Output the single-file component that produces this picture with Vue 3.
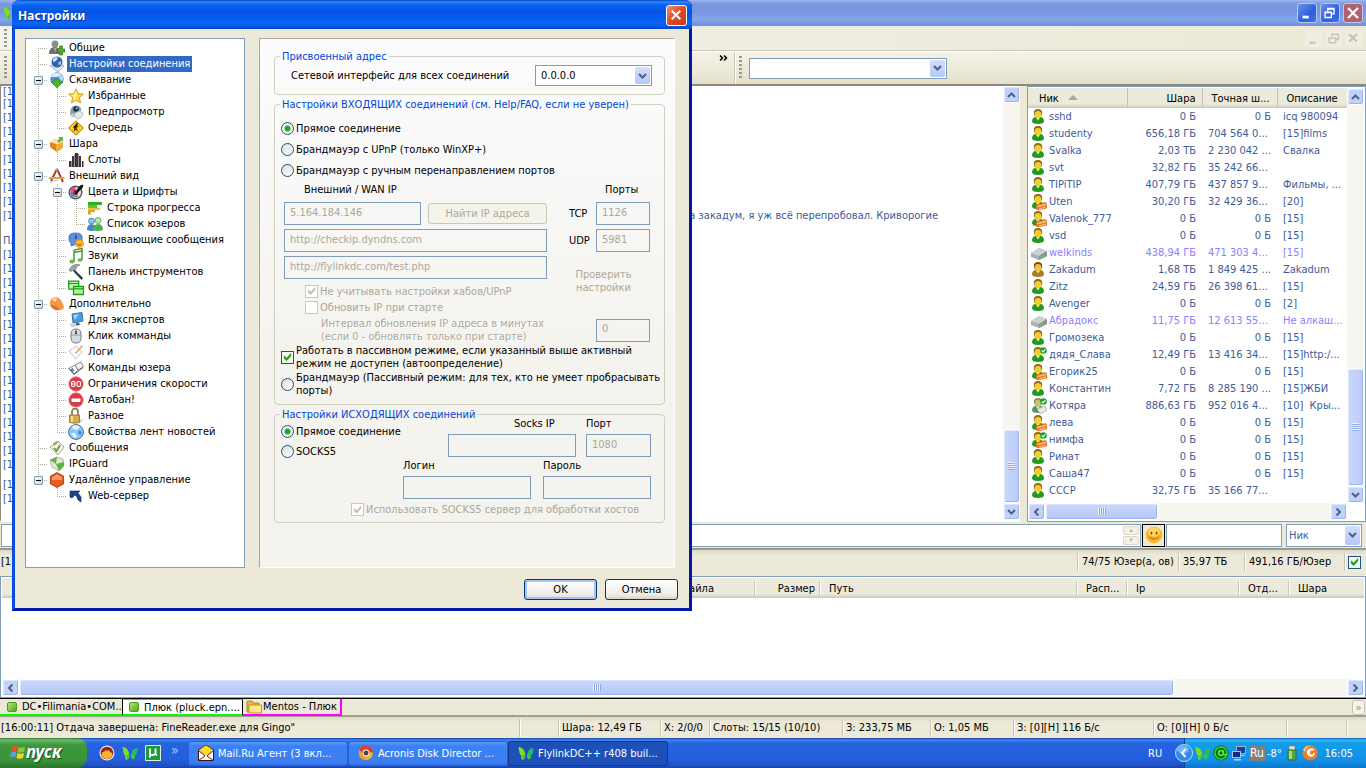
<script setup>
import { ref } from 'vue'

const icons = {
  userAdd: '<circle cx="6" cy="4" r="3.400" fill="#8d8d88"/><path d="M0 14q0-7 6-7t6 7z" fill="#6f706b"/><path d="M5 8l1 4 2-4z" fill="#a9aaa5"/><path d="M10.500 6h3v3H16v3h-2.500v3h-3v-3H8V9h2.500z" fill="#54a82c" stroke="#2f7d14" stroke-width=".7"/>',
  globeNet: '<path d="M1 10l7-3 7 3-6 6z" fill="#e6e8eb" stroke="#9a9ea6" stroke-width=".8"/><circle cx="8" cy="6" r="5.500" fill="#2c64ad"/><path d="M4 3q3-3 5-1l-2 3-3 1z" fill="#cfe6fa"/><path d="M9.500 6l3-1-1 4-2 0z" fill="#9fc6ee"/>',
  globeDown: '<circle cx="8" cy="7" r="6.700" fill="#4f8fd6"/><path d="M2 5Q3 1 7 .8T13 3L8 5z" fill="#d9ecfb"/><path d="M10 4l4-1q1 4-1 6l-3-1z" fill="#a9d6f2"/><path d="M5.500 7h5v3H14l-6 6-6-6h3.500z" fill="#4fb32b" stroke="#35861a" stroke-width=".6"/>',
  star: '<path d="M8 .8l2.100 4.800 5.300.5-4 3.500 1.200 5.300L8 12.200l-4.600 2.700 1.200-5.300-4-3.500 5.300-.5z" fill="#ffd83a" stroke="#c89a10" stroke-width=".9"/><path d="M8 3l1 3.500L8 11l-3 2 1-4-3-2 3-.5z" fill="#fff29a"/>',
  preview: '<path d="M2 11Q2 1 8 1.500t5 5.500l-3 2-4 4z" fill="#8a9bb0"/><circle cx="8" cy="5" r="2.800" fill="#1e2f47"/><circle cx="8.600" cy="4.300" r="1" fill="#a9c8ef"/><path d="M6 10l5-3 4 2-1 4-4 2-3-2z" fill="#e6e9ec" stroke="#9da5ae" stroke-width=".6"/><path d="M2 11l3-2 1 3-2 2z" fill="#c7d6e6"/>',
  sign: '<path d="M8 .8L15.500 8 8 15.200.5 8z" fill="#ffcc1a" stroke="#a87908"/><path d="M8 4.600l1.500 1L11 7.500l-2-1-.5 2L10.500 12 7.600 9.500 5.500 12l1-4-1.500-.5L7 5z" fill="#221d10"/><circle cx="8.800" cy="4" r="1.100" fill="#221d10"/>',
  share: '<path d="M1 6l7 2 6-2v5q0 2-6 5-7-4-7-7z" fill="#f3aa3c"/><path d="M1 6l6 2v7Q1 12 1 10z" fill="#d98625"/><path d="M1 6l5-4 3 2 5 2-6 2z" fill="#ffe0a0"/><path d="M9 1h5v5l-1.500-1.500L10 7 8 5l2.500-2.500z" fill="#6ab04a"/>',
  slots: '<path d="M1 9h2v6H1zM4 4h2v11H4zM7 1h3v14H7zM11 4h2v11h-2zM14 9h1.500v6H14z" fill="#3e3436"/><path d="M3 9h1v6H3zM6 2h1v13H6zM10 2h1v13h-1z" fill="#9b9092"/>',
  compass: '<path d="M8 1L2 13M8 1l6 13" stroke="#b3331e" stroke-width="1.900"/><path d="M0 9h15l1 2H0z" fill="#d9a25a"/><path d="M1 15q4-3 8-3" stroke="#bbb" fill="none"/><circle cx="8" cy="2" r="1.400" fill="#999"/>',
  palette: '<circle cx="7.500" cy="8.500" r="7" fill="#555"/><circle cx="7.500" cy="8.500" r="5.600" fill="#e3d9e2"/><path d="M7.500 8.500V3a5.500 5.500 0 0 0-5 4z" fill="#d5518a"/><path d="M7.500 8.500l-5-1.500a5.500 5.500 0 0 0 3 6.500z" fill="#6a7bd8"/><path d="M7.500 8.500l-2 5a5.500 5.500 0 0 0 5-.8z" fill="#44b394"/><circle cx="7.500" cy="8.500" r="2.600" fill="#b12331"/><path d="M7 9l5-7 3-1-1 3-6 6z" fill="#18181a" stroke="#18181a"/>',
  bars: '<path d="M1 2h14v3H1z" fill="#2fae20"/><path d="M1 5h9v3H1z" fill="#5fc42a"/><path d="M1 8h12v2H1z" fill="#e9c13c"/><path d="M1 10h7v2H1zM1 12h3v2.500H1z" fill="#d6ac30"/>',
  people: '<circle cx="4.500" cy="5" r="2.900" fill="#8cc6ee" stroke="#2d70b0" stroke-width=".7"/><path d="M0 14q0-6 4.500-6T9 14q-4 2-9 0z" fill="#3f88cc"/><circle cx="11" cy="4.500" r="3" fill="#b9e8a8" stroke="#3f9143" stroke-width=".7"/><path d="M6 14q0-6 5-6t5 6q-5 2-10 0z" fill="#4fae52"/>',
  popup: '<path d="M1 5q0-4 6.500-4T14 5v4q0 3-5 3l-6 2V11Q1 10 1 8z" fill="#5f8fdc" stroke="#3b64b0" stroke-width=".8"/><path d="M7 3h1.500v4H7z" fill="#234a95"/><circle cx="11.500" cy="11.500" r="4" fill="#ffb62e" stroke="#d8820e" stroke-width=".6"/><path d="M9.500 12q2 2.500 4 0" stroke="#7a4707" fill="none"/>',
  note: '<path d="M6 2l8-1.500V12" stroke="#4c9a34" stroke-width="1.500" fill="none"/><path d="M6 2v11M6 4.500l8-1.500" stroke="#4c9a34" stroke-width="1.500"/><ellipse cx="4" cy="13.500" rx="2.600" ry="1.900" fill="#69b848"/><ellipse cx="12" cy="12" rx="2.500" ry="1.800" fill="#69b848"/>',
  hammer: '<path d="M6 5l9 9-1.500 2L5 7z" fill="#33373d"/><path d="M1 6l3-4 4-2 4 1-3 1-1 3-3 2-1-1-1 2z" fill="#9da3a8" stroke="#6b7075" stroke-width=".6"/>',
  windows: '<path d="M.7 1.200h10v8H.7z" fill="#cdf7bd" stroke="#14a313" stroke-width="1.300"/><path d="M1 3.500h9.500" stroke="#14a313" stroke-width="1.200"/><path d="M5.500 6.500h10v8h-10z" fill="#b5f0a2" stroke="#14a313" stroke-width="1.300"/><path d="M6 8.800h9.500" stroke="#14a313" stroke-width="1.200"/>',
  helmet: '<path d="M1 9Q0 3 5 1.500T13 6l2 5q0 3-4 3Q7 10 1 9z" fill="#f79646"/><path d="M3 4q2-3 5-1.500L7 6z" fill="#ffd9b0"/><path d="M1 9q7 0 10 5-5 1-8-2z" fill="#dd6f20"/>',
  monitor: '<path d="M4 2l10-1.500L15 9 5 11z" fill="#3aa0e8" stroke="#2f5f88" stroke-width=".8"/><path d="M5 3l6-1-4 6z" fill="#9bd6fa"/><path d="M8 11l3-.6 1 2.600-5 1z" fill="#59636c"/><path d="M1 12l5-1 3 3-5 1.500z" fill="#cfd4d9"/>',
  mouse: '<path d="M3 6q0-5 5-5t5 5v4q0 5-5 5t-5-5z" fill="#d9dbe0" stroke="#77797f"/><path d="M8 1v6M3 7h10" stroke="#8b8d93" stroke-width=".8"/><path d="M7 3h2v3H7z" fill="#555"/>',
  logs: '<path d="M1 7l7-5 6 6-6 7z" fill="#fbfbfb" stroke="#c0c0c0" stroke-width=".9"/><path d="M8 8l6-7 1 1-6 7z" fill="#e9a23a"/><path d="M7 9.500l1-1.500 1 1z" fill="#a55"/>',
  book: '<path d="M1 8l6-3 3 5-4 4z" fill="#fdfdfd" stroke="#777" stroke-width=".8"/><path d="M7 5l6-3 2.500 5L10 10z" fill="#f1f1f1" stroke="#777" stroke-width=".8"/><path d="M3 9l2 3M4 8l2 3" stroke="#3a77b5" stroke-width="1.200"/><path d="M1 8.500l5 6 9-7" stroke="#555" fill="none"/>',
  limit: '<circle cx="8" cy="8" r="7.200" fill="#d63d4a" stroke="#e8747d" stroke-width=".8"/><rect x="3.600" y="5.500" width="3.400" height="5" rx="1.200" fill="none" stroke="#fff" stroke-width="1.100"/><path d="M3.500 8H7" stroke="#fff"/><rect x="9" y="5.500" width="3.400" height="5" rx="1.200" fill="none" stroke="#fff" stroke-width="1.100"/>',
  ban: '<circle cx="8" cy="8" r="7.200" fill="#d63d4a" stroke="#e8747d" stroke-width=".8"/><rect x="3.500" y="6.500" width="9" height="3.400" rx=".8" fill="#fff"/>',
  lock: '<path d="M4 8V4q0-3.300 3-3.300T10 4v4" fill="none" stroke="#8c7a4c" stroke-width="1.700"/><path d="M1.500 7h10v7.500q-5 1.500-10 0z" fill="#d8ae4d" stroke="#8a6a22" stroke-width=".8"/><path d="M3 8h2v6H3z" fill="#f4dc98"/><path d="M12 12l4-1-4 4z" fill="#ccc"/>',
  feeds: '<circle cx="8" cy="8" r="7.400" fill="#8cc8f5" stroke="#2b5f9e" stroke-width=".9"/><path d="M4 2q5-2 8 1L9 6 5 5zM3 9l4 0 2 4-3 1z" fill="#e5f5ff"/><path d="M11 6q4 2 2 5l-3-1z" fill="#3e8ad6"/>',
  messages: '<path d="M1 7l8-6 6 6-6 8z" fill="#f7f4ea" stroke="#a59b83" stroke-width=".9"/><path d="M4 3l4-2 1 2-4 3z" fill="#b89b6f"/><path d="M5 8l2.500 3L11 5" fill="none" stroke="#59a835" stroke-width="1.900"/>',
  guard: '<path d="M1 4l7-3 6 2 1 6-5 6-7-4z" fill="#dfe9da" stroke="#7d8a77" stroke-width=".6"/><path d="M1 4l6 4 1-7zM7 8l8-2v4l-5 5z" fill="#5cb53c"/>',
  stop: '<path d="M8 .8l6.500 3.600v7.200L8 15.200l-6.500-3.600V4.400z" fill="#e85c22" stroke="#c2480f" stroke-width="1.200"/><path d="M8 2.500l5 2.800V8H3V5.300z" fill="#f79a6a"/>',
  web: '<path d="M2 3h10l-2 2 3 4v5l-3-2-1-3-2-2-3 3-2-1z" fill="#1c4386" stroke="#0f2a5c" stroke-width=".6"/>',
}

const tree = [
  ['f', 'userAdd', 'Общие'],
  ['t', 'globeNet', 'Настройки соединения', true],
  ['T', 'globeDown', 'Скачивание'],
  ['vt', 'star', 'Избранные'],
  ['vt', 'preview', 'Предпросмотр'],
  ['vl', 'sign', 'Очередь'],
  ['T', 'share', 'Шара'],
  ['vl', 'slots', 'Слоты'],
  ['T', 'compass', 'Внешний вид'],
  ['vT', 'palette', 'Цвета и Шрифты'],
  ['vvt', 'bars', 'Строка прогресса'],
  ['vvl', 'people', 'Список юзеров'],
  ['vt', 'popup', 'Всплывающие сообщения'],
  ['vt', 'note', 'Звуки'],
  ['vt', 'hammer', 'Панель инструментов'],
  ['vl', 'windows', 'Окна'],
  ['T', 'helmet', 'Дополнительно'],
  ['vt', 'monitor', 'Для экспертов'],
  ['vt', 'mouse', 'Клик комманды'],
  ['vt', 'logs', 'Логи'],
  ['vt', 'book', 'Команды юзера'],
  ['vt', 'limit', 'Ограничения скорости'],
  ['vt', 'ban', 'Автобан!'],
  ['vt', 'lock', 'Разное'],
  ['vl', 'feeds', 'Свойства лент новостей'],
  ['t', 'messages', 'Сообщения'],
  ['t', 'guard', 'IPGuard'],
  ['L', 'stop', 'Удалённое управление'],
  ['el', 'web', 'Web-сервер'],
]
const guideClass = {
  f: 'g-first g-h', t: 'g-v g-h', T: 'g-v g-h', v: 'g-v', l: 'g-half g-h', L: 'g-half g-h', e: '',
}

const body = (hair, skin, coat) =>
  `<path d="M1 12.500Q1 7.500 7 7.500t6 5Q12.500 15 7 15t-6-2.500z" fill="${coat}"/><path d="M5 8.500h4L7 11.500z" fill="#e9f7d0"/><ellipse cx="7" cy="4" rx="4.200" ry="4" fill="${hair}"/><ellipse cx="7" cy="5.600" rx="3.400" ry="3.700" fill="${skin}"/>`
const green = body('#94661c', '#f2d02a', '#239a1e')
const brick = '<path d="M5 11l9-2.500 2 1v4.500l-9 2-2-1z" fill="#f07d22" stroke="#c65a10" stroke-width=".5"/><path d="M6 12.500l10-2.500M8 15l7-2M9 11v2M13 10v2" stroke="#ffd6a6" stroke-width=".8"/>'
const tick = '<circle cx="12.500" cy="3.500" r="3.300" fill="#18a52a"/><path d="M10.800 3.500l1.400 1.500 2.200-3" stroke="#fff" fill="none" stroke-width="1.100"/>'
const userIcons = {
  n: green,
  b: green + brick,
  o: body('#7a4a10', '#f0c040', '#a87c28'),
  c: green + tick,
  bc: green + brick + tick,
  g: body('#8f8f60', '#c5c27c', '#55965a') + '<path d="M6 11l8-3 2 4-7 4z" fill="#e8e8e8" stroke="#999" stroke-width=".6"/>' + tick,
  s: '<path d="M0 8l8-5 8 3v5l-8 4-8-3z" fill="#a9b0b5"/><path d="M0 8l8-5 8 3-8 5z" fill="#ccd1d5"/><path d="M8 11l8-5v5l-8 4z" fill="#8b9398"/><path d="M9 12.500l4-2" stroke="#62d23c" stroke-width="1.200"/>',
}
const users = [
  ['n', 'sshd', '0 Б', '0 Б', 'icq 980094'],
  ['n', 'studenty', '656,18 ГБ', '704 564 0...', '[15]films'],
  ['n', 'Svalka', '2,03 ТБ', '2 230 042 ...', 'Свалка'],
  ['n', 'svt', '32,82 ГБ', '35 242 66...', ''],
  ['n', 'TIPiTIP', '407,79 ГБ', '437 857 9...', 'Фильмы, ...'],
  ['b', 'Uten', '30,20 ГБ', '32 429 36...', '[20]'],
  ['b', 'Valenok_777', '0 Б', '0 Б', '[15]'],
  ['n', 'vsd', '0 Б', '0 Б', '[15]'],
  ['s', 'welkinds', '438,94 ГБ', '471 303 4...', '[15]'],
  ['o', 'Zakadum', '1,68 ТБ', '1 849 425 ...', 'Zakadum'],
  ['n', 'Zitz', '24,59 ГБ', '26 398 61...', '[15]'],
  ['n', 'Avenger', '0 Б', '0 Б', '[2]'],
  ['s', 'Абрадокс', '11,75 ГБ', '12 613 55...', 'Не алкаш...'],
  ['n', 'Громозека', '0 Б', '0 Б', '[15]'],
  ['c', 'дядя_Слава', '12,49 ГБ', '13 416 34...', '[15]http:/...'],
  ['b', 'Егорик25', '0 Б', '0 Б', '[15]'],
  ['n', 'Константин', '7,72 ГБ', '8 285 190 ...', '[15]ЖБИ'],
  ['g', 'Котяра', '886,63 ГБ', '952 016 4...', '[10]  Кры...'],
  ['b', 'лева', '0 Б', '0 Б', '[15]'],
  ['bc', 'нимфа', '0 Б', '0 Б', '[15]'],
  ['n', 'Ринат', '0 Б', '0 Б', '[15]'],
  ['n', 'Саша47', '0 Б', '0 Б', '[15]'],
  ['n', 'СССР', '32,75 ГБ', '35 166 77...', ''],
]

const butterfly = '<path d="M.5 2q5 0 6.500 6l.5 4-2.500 3q-3-1-1.500-4Q1 9 .5 2z" fill="#7ee01c"/><path d="M15.500 3Q11 3 9.500 8L9 12l2 2.500q3-1 2-3.500 2.500-2 2.500-8z" fill="#25b86a"/><path d="M4 11l3-2v4l-2 2zM12.500 11L9.500 9 9 12.500l2 2z" fill="#4cc436"/>'

const chatTop = Array(10).fill('[1')
const chatRest = Array(16).fill('[1')
const incoming = ref('direct')
const outgoing = ref('direct')
</script>

<template>
  <div class="desktop">
    <svg class="defs" width="0" height="0" aria-hidden="true">
      <symbol id="chev" viewBox="0 0 9 6"><path d="M1 1l3.500 3.500L8 1" fill="none" stroke="#4d6185" stroke-width="2" /></symbol>
    </svg>

    <main class="app">
      <header class="titlebar">
        <svg class="i16" viewBox="0 0 16 16" v-html="butterfly"></svg>
        <div class="capbtns">
          <button aria-label="Свернуть"><svg viewBox="0 0 20 20"><path d="M5 13h7v3H5z" fill="#fff" /></svg></button>
          <button aria-label="Восстановить"><svg viewBox="0 0 20 20"><path d="M7.500 8V5h7v6h-3M7 5.500h8M4.500 9h7v6h-7zM4 9.500h8" fill="none" stroke="#fff" stroke-width="1.500" /></svg></button>
          <button class="close" aria-label="Закрыть"><svg viewBox="0 0 20 20"><path d="M4.500 4.500l11 11M15.500 4.500l-11 11" stroke="#fff" stroke-width="2.400" /></svg></button>
        </div>
      </header>
      <div class="menubar">
        <span class="grip"></span>
        <div class="mdi">
          <button aria-label="Свернуть окно"><svg viewBox="0 0 16 16"><path d="M4 11h6v2H4z" fill="#c9c6b8" /></svg></button>
          <button aria-label="Восстановить окно"><svg viewBox="0 0 16 16"><path d="M6.500 6V4h6v5h-2M4 7.500h6V12H4z" fill="none" stroke="#c9c6b8" stroke-width="1.500" /></svg></button>
          <button aria-label="Закрыть окно"><svg viewBox="0 0 16 16"><path d="M4 4l7 7M11 4l-7 7" stroke="#c9c6b8" stroke-width="2.200" /></svg></button>
        </div>
      </div>
      <div class="toolbar">
        <span class="grip"></span>
        <div class="band">
          <svg class="i16" viewBox="0 0 16 16"><circle cx="8" cy="8" r="8" fill="#3fc43a" /></svg>
          <svg class="more" viewBox="0 0 9 6"><path d="M1 .5L3.500 3 1 5.500M5 .5L7.500 3 5 5.500" fill="none" stroke="#000" stroke-width="1.500" /></svg>
        </div>
        <span class="grip"></span>
        <div class="combo find">
          <select aria-label="Быстрый поиск"><option></option></select>
          <span class="drop"><svg><use href="#chev" /></svg></span>
        </div>
      </div>

      <section class="content">
        <div class="chat">
          <div class="log">
            <p v-for="(t, i) in chatTop" :key="i" class="line"><span>{{ t }}</span><span v-if="i === 9" class="tail">на закадум, я уж всё перепробовал. Криворогие</span></p>
            <p class="line topic">Плюк</p>
            <p v-for="(t, i) in chatRest" :key="'r' + i" class="line">{{ t }}</p>
            <p class="line spaced">[1</p>
            <p class="line">[1</p>
          </div>
          <div class="vbar">
            <button class="sb" aria-label="Вверх"><svg class="up"><use href="#chev" /></svg></button>
            <div class="vtrack end"><div class="vthumb chatthumb"></div></div>
            <button class="sb" aria-label="Вниз"><svg><use href="#chev" /></svg></button>
          </div>
        </div>
        <div class="users">
          <div class="usertop">
            <div class="tablewrap">
              <table>
                <colgroup><col class="c1" /><col class="c2" /><col class="c2" /><col /></colgroup>
                <thead>
                  <tr>
                    <th class="nickh">Ник <i class="sort"></i></th>
                    <th class="r">Шара</th>
                    <th class="exact">Точная ш...</th>
                    <th class="desc">Описание</th>
                  </tr>
                </thead>
                <tbody>
                  <tr v-for="u in users" :key="u[1]" :class="{ server: u[0] === 's' }">
                    <td><span class="nick"><svg class="i16" viewBox="0 0 16 16" v-html="userIcons[u[0]]"></svg>{{ u[1] }}</span></td>
                    <td class="r">{{ u[2] }}</td>
                    <td :class="{ r: u[3] === '0 Б' }">{{ u[3] }}</td>
                    <td>{{ u[4] }}</td>
                  </tr>
                </tbody>
              </table>
            </div>
            <div class="vbar">
              <button class="sb" aria-label="Вверх"><svg class="up"><use href="#chev" /></svg></button>
              <div class="vtrack end"><div class="vthumb listthumb"></div></div>
              <button class="sb" aria-label="Вниз"><svg><use href="#chev" /></svg></button>
            </div>
          </div>
          <div class="hbar userbar">
            <button class="sb" aria-label="Влево"><svg class="left"><use href="#chev" /></svg></button>
            <div class="htrack"><div class="hthumb userthumb"></div></div>
            <button class="sb" aria-label="Вправо"><svg class="right"><use href="#chev" /></svg></button>
          </div>
        </div>
      </section>

      <div class="inputrow">
        <div class="message">
          <input type="text" aria-label="Сообщение" />
          <div class="spin"><button aria-label="Предыдущее">▴</button><button aria-label="Следующее">▾</button></div>
        </div>
        <button class="smile" aria-label="Смайлы">
          <svg viewBox="0 0 18 18"><circle cx="9" cy="9" r="8.300" fill="#ffb325" /><ellipse cx="9" cy="6" rx="6" ry="4.500" fill="#ffd75e" /><ellipse cx="6.500" cy="7" rx=".9" ry="1.600" fill="#7a4700" /><ellipse cx="11.500" cy="7" rx=".9" ry="1.600" fill="#7a4700" /><path d="M4 11q5 4 10 0" stroke="#a86408" stroke-width="1" fill="none" /></svg>
        </button>
        <input class="filter" type="text" aria-label="Фильтр" />
        <div class="combo nickcombo">
          <select aria-label="Поле фильтра"><option>Ник</option></select>
          <span class="drop"><svg><use href="#chev" /></svg></span>
        </div>
      </div>

      <div class="hubstatus">
        <span class="grow">[1</span>
        <span class="h1">74/75 Юзер(а, ов)</span>
        <span class="h2">35,97 ТБ</span>
        <span class="h3">491,16 ГБ/Юзер</span>
        <input type="checkbox" checked aria-label="Показать список" />
      </div>

      <section class="transfers">
        <div class="thead">
          <span class="t1">файла</span><span class="t2">Размер</span><span class="t3">Путь</span><span class="t4">Расп...</span><span class="t5">Ip</span><span class="t4">Отд...</span><span class="t6">Шара</span>
        </div>
        <div class="tbody"></div>
        <div class="hbar">
          <button class="sb" aria-label="Влево"><svg class="left"><use href="#chev" /></svg></button>
          <div class="htrack"><div class="hthumb widethumb"></div></div>
          <button class="sb" aria-label="Вправо"><svg class="right"><use href="#chev" /></svg></button>
        </div>
      </section>

      <nav class="tabs">
        <button class="tab"><i class="sq"></i>DC•Filimania•COM...</button>
        <button class="tab on"><i class="sq"></i>Плюк (pluck.epn....</button>
        <button class="tab pm"><svg class="i16" viewBox="0 0 16 16"><path d="M1 3q0-1 1-1h4l1 2h6v9H1z" fill="#e8b93a" stroke="#a47a14" stroke-width=".8" /><path d="M3 6h12.500v8H3z" fill="#ffe88c" stroke="#b98c1c" stroke-width=".9" /></svg>Mentos - Плюк</button>
        <button class="tabmore" aria-label="Ещё вкладки">»</button>
      </nav>

      <footer class="status">
        <span class="grow">[16:00:11] Отдача завершена: FineReader.exe для Gingo"</span>
        <span class="s0"></span>
        <span class="s1">Шара: 12,49 ГБ</span>
        <span class="s2">Х: 2/0/0</span>
        <span class="s3">Слоты: 15/15 (10/10)</span>
        <span class="s4">З: 233,75 МБ</span>
        <span class="s5">О: 1,05 МБ</span>
        <span class="s6">З: [0][Н] 116 Б/с</span>
        <span class="s3">О: [0][Н] 0 Б/с</span>
        <span class="s7"></span>
        <span class="s8"></span>
      </footer>
    </main>

    <footer class="taskbar">
      <button class="start">
        <svg viewBox="0 0 16 16"><path d="M2 3q3-2 5.500-.5L6.500 7.500Q4 6 1 8z" fill="#e9532a" /><path d="M8.500 3q3 1.500 6.500 0L14 8q-3.500 1.500-6.500 0z" fill="#8cc63e" /><path d="M1 9q3-2 5.500-.5L5 13.500q-2.500-1.500-5 .5z" fill="#5f9bf0" /><path d="M7.500 9q3 1.500 6.500 0L13 14q-4 1.500-6.500 0z" fill="#fccf2c" /></svg>
        пуск
      </button>
      <div class="quick">
        <svg class="i16" viewBox="0 0 16 16"><circle cx="8" cy="8" r="7.500" fill="#f5e9e0" /><circle cx="8" cy="8" r="6.300" fill="#9c2020" /><path d="M2.500 10Q3 6 5 7l1.500-2 1.500 1 2-1 1 2q2 0 2.500 3-1.500 4-5.500 4t-5.500-4z" fill="#f5b335" /></svg>
        <svg class="i16" viewBox="0 0 16 16" v-html="butterfly"></svg>
        <svg class="i16" viewBox="0 0 16 16"><path d="M.5.500h15v15H.5z" fill="#1f9a3c" stroke="#d8efdc" /><path d="M5 3.500v9M5 8.500q0 1.500 2.500 1.500T10.500 8V3.500v5q0 1.500 1.500 1.500" stroke="#fff" stroke-width="1.800" fill="none" /></svg>
        <span class="qmore">»</span>
      </div>
      <button class="task">
        <svg class="i16" viewBox="0 0 16 16"><path d="M.5 5L8 0l7.500 5v10.500H.5z" fill="#fff" stroke="#3c1010" /><path d="M3 7V3.500L8 .5l5 3V7l-5 3z" fill="#ffe21a" stroke="#a08c00" stroke-width=".5" /><path d="M.5 5.500L7 11l-6.500 4.500M15.500 5.500L9 11l6.500 4.500" fill="none" stroke="#7c1414" /></svg>
        <span>Mail.Ru Агент (3 вкл...</span>
      </button>
      <button class="task">
        <svg class="i16" viewBox="0 0 16 16"><circle cx="8" cy="8" r="7" fill="#f6b62a" /><path d="M1.500 5A7 7 0 0 1 15 7.500H8L5 12z" fill="#e0402a" /><path d="M1.500 5A7 7 0 0 0 7 15l2-4-4-2z" fill="#f2a01c" /><circle cx="8" cy="8" r="3.500" fill="#fff" /><circle cx="8" cy="8" r="2.500" fill="#48464a" /></svg>
        <span>Acronis Disk Director ...</span>
      </button>
      <button class="task active">
        <svg class="i16" viewBox="0 0 16 16" v-html="butterfly"></svg>
        <span>FlylinkDC++ r408 buil...</span>
      </button>
      <span class="lang">RU</span>
      <div class="tray">
        <button class="expand" aria-label="Показать скрытые значки"><svg viewBox="0 0 18 18"><circle cx="9" cy="9" r="8.500" fill="#2f8ae6" stroke="#bcdcf8" /><ellipse cx="8" cy="5.500" rx="6" ry="4" fill="#70b6f4" /><path d="M10.500 5L7 9l3.500 4" stroke="#fff" stroke-width="2" fill="none" /></svg></button>
        <svg class="i16" viewBox="0 0 16 16" v-html="butterfly"></svg>
        <svg class="i16" viewBox="0 0 16 16"><circle cx="8" cy="8" r="7.600" fill="#0b6b13" /><circle cx="8" cy="8" r="6" fill="none" stroke="#3dd83a" stroke-width="1.400" /><circle cx="8" cy="8" r="2.400" fill="none" stroke="#56f04c" stroke-width="1.500" /><path d="M10.500 5.500V9q1 2 3 0" stroke="#56f04c" stroke-width="1.300" fill="none" /></svg>
        <svg class="i16" viewBox="0 0 16 16"><path d="M5 1h10v8H5z" fill="#a6b2c4" /><path d="M6 2h8v6H6z" fill="#1b3fa8" /><path d="M1 6h9v7H1z" fill="#b4bfd0" /><path d="M2 7h7v5H2z" fill="#12298a" /><path d="M3 14h7v1.500H3zM10 10h4v1h-4z" fill="#c4ccd8" /></svg>
        <span class="punto">Ru</span>
        <span class="temp">-8°</span>
        <svg class="i16" viewBox="0 0 16 16"><path d="M5 1h6v4H5z" fill="#dfe4df" stroke="#7a877a" stroke-width=".7" /><path d="M4 5h8v10H4z" fill="#57a83a" stroke="#2f6a1c" stroke-width=".8" /><path d="M5 6h3v8H5z" fill="#a2d88c" /></svg>
        <svg class="i16" viewBox="0 0 16 16"><circle cx="8" cy="8" r="7.600" fill="#ee7b1c" /><path d="M1 5q2-5 8-4.500Q4 2 3 7z" fill="#ffc27a" /><circle cx="9" cy="7.500" r="4.200" fill="#fff" /><circle cx="9.800" cy="7.500" r="1.900" fill="#ee7b1c" /><path d="M10 6l5-2v6z" fill="#ee7b1c" /></svg>
        <time>16:05</time>
      </div>
    </footer>

    <div class="dialog" role="dialog" aria-labelledby="dlg-title">
      <header class="dtitle">
        <h1 id="dlg-title">Настройки</h1>
        <button class="dclose" aria-label="Закрыть"><svg viewBox="0 0 20 20"><path d="M5 5l9 9M14 5l-9 9" stroke="#fff" stroke-width="2.200" /></svg></button>
      </header>
      <div class="dbody">
        <div class="columns">
          <ul class="tree">
            <li v-for="n in tree" :key="n[2]">
              <span v-for="(g, i) in n[0]" :key="i" class="guide" :class="guideClass[g]">
                <button v-if="g === 'T' || g === 'L'" class="exp" aria-label="Свернуть ветку"></button>
              </span>
              <svg class="i16" viewBox="0 0 16 16" v-html="icons[n[1]]"></svg>
              <a href="#" :class="{ sel: n[3] }">{{ n[2] }}</a>
            </li>
          </ul>

          <form class="panel" @submit.prevent>
            <fieldset class="f1">
              <legend>Присвоенный адрес</legend>
              <div class="iface">
                <label for="iface">Сетевой интерфейс для всех соединений</label>
                <div class="combo">
                  <select id="iface"><option>0.0.0.0</option></select>
                  <span class="drop"><svg><use href="#chev" /></svg></span>
                </div>
              </div>
            </fieldset>

            <fieldset class="f2">
              <legend>Настройки ВХОДЯЩИХ соединений (см. Help/FAQ, если не уверен)</legend>
              <div class="radios">
                <label><input v-model="incoming" type="radio" name="in" value="direct" />Прямое соединение</label>
                <label><input v-model="incoming" type="radio" name="in" value="upnp" />Брандмауэр с UPnP (только WinXP+)</label>
                <label><input v-model="incoming" type="radio" name="in" value="manual" />Брандмауэр с ручным перенаправлением портов</label>
              </div>
              <div class="net">
                <div class="netleft">
                  <label class="cap wan" for="wan">Внешний / WAN IP</label>
                  <div class="iprow">
                    <input id="wan" type="text" value="5.164.184.146" disabled />
                    <button class="plain" disabled>Найти IP адреса</button>
                  </div>
                  <input type="text" value="http://checkip.dyndns.com" aria-label="Адрес проверки 1" disabled />
                  <input type="text" value="http://flylinkdc.com/test.php" aria-label="Адрес проверки 2" disabled />
                  <div class="checks">
                    <label class="off"><input type="checkbox" checked disabled />Не учитывать настройки хабов/UPnP</label>
                    <label class="off"><input type="checkbox" disabled />Обновить IP при старте</label>
                  </div>
                </div>
                <div class="netright">
                  <span class="cap ports">Порты</span>
                  <label>TCP<input type="text" value="1126" disabled /></label>
                  <label>UDP<input type="text" value="5981" disabled /></label>
                  <button class="test" disabled>Проверить настройки</button>
                </div>
              </div>
              <div class="interval">
                <label for="interval" class="off">Интервал обновления IP адреса в минутах<br />(если 0 - обновлять только при старте)</label>
                <input id="interval" type="text" value="0" disabled />
              </div>
              <div class="passive">
                <label><input type="checkbox" checked /><span>Работать в пассивном режиме, если указанный выше активный<br />режим не доступен (автоопределение)</span></label>
                <label><input v-model="incoming" type="radio" name="in" value="passive" /><span>Брандмауэр (Пассивный режим: для тех, кто не умеет пробрасывать<br />порты)</span></label>
              </div>
            </fieldset>

            <fieldset class="f3">
              <legend>Настройки ИСХОДЯЩИХ соединений</legend>
              <div class="out">
                <div class="outradios">
                  <label><input v-model="outgoing" type="radio" name="out" value="direct" />Прямое соединение</label>
                  <label><input v-model="outgoing" type="radio" name="out" value="socks" />SOCKS5</label>
                </div>
                <div class="outfields">
                  <div class="pair first">
                    <label class="w128 socks"><span>Socks IP</span><input type="text" disabled /></label>
                    <label class="grow"><span>Порт</span><input type="text" value="1080" disabled /></label>
                  </div>
                  <div class="pair second">
                    <label class="w128"><span>Логин</span><input type="text" disabled /></label>
                    <label class="grow"><span>Пароль</span><input type="password" disabled /></label>
                  </div>
                </div>
              </div>
              <label class="off resolve"><input type="checkbox" checked disabled />Использовать SOCKS5 сервер для обработки хостов</label>
            </fieldset>
          </form>
        </div>
        <div class="actions">
          <button class="cmd default">OK</button>
          <button class="cmd">Отмена</button>
        </div>
      </div>
    </div>
  </div>
</template>

<style>
body {
  margin: 0;
  overflow: hidden;
}
</style>

<style scoped>
* {
  box-sizing: border-box;
}
.desktop {
  position: relative;
  display: flex;
  flex-direction: column;
  height: 100vh;
  font: 11px/13px Tahoma, "DejaVu Sans Condensed", "DejaVu Sans", sans-serif;
  color: #000;
  background: #ece9d8;
  overflow: hidden;
}
.defs {
  position: absolute;
}
button, input, select {
  font: inherit;
  color: inherit;
  margin: 0;
  padding: 0;
  border: 0;
  border-radius: 0;
  background: none;
  outline: 0;
  min-width: 0;
}
p, ul, h1, fieldset {
  margin: 0;
  padding: 0;
}
.i16 {
  width: 16px;
  height: 16px;
  flex: none;
}
.grow {
  flex: 1;
  min-width: 0;
}

/* main window */
.app {
  flex: 1;
  min-height: 0;
  display: flex;
  flex-direction: column;
}
.titlebar {
  height: 26px;
  display: flex;
  align-items: center;
  justify-content: space-between;
  padding: 0 3px;
  background: linear-gradient(#9db8ee 0, #7a96df 4px, #7a96df 11px, #82a5e9 20px, #7590dd 25px);
}
.capbtns {
  display: flex;
  gap: 3px;
}
.capbtns button {
  width: 20px;
  height: 20px;
  border: 1px solid #b7c7f0;
  border-radius: 3px;
  background: linear-gradient(135deg, #6c8fe8, #2f5fdc 60%, #3f70e6);
}
.capbtns svg, .mdi svg, .dclose svg {
  display: block;
  width: 100%;
  height: 100%;
}
.capbtns .close {
  background: #b3606f;
}
.menubar {
  height: 25px;
  display: flex;
  align-items: center;
  justify-content: space-between;
  padding: 0 4px;
  background: linear-gradient(90deg, #f3f2ed, #ece9d8);
  border-bottom: 1px solid #cbc7b8;
}
.grip {
  width: 3px;
  height: 24px;
  background: repeating-linear-gradient(#9c998a 0 2px, transparent 2px 4px);
}
.menubar .grip {
  height: 18px;
}
.mdi {
  display: flex;
  gap: 3px;
}
.mdi button {
  width: 17px;
  height: 17px;
  background: #f0eee2;
}
.toolbar {
  height: 35px;
  display: flex;
  align-items: center;
  padding-left: 4px;
  background: linear-gradient(#f4f2e8, #ece9d8 60%, #e2dfcd);
  border-top: 1px solid #fff;
  border-bottom: 2px solid #8d8a7b;
}
.band {
  width: 728px;
  height: 32px;
  padding: 3px 6px;
  margin-right: 4px;
  display: flex;
  justify-content: flex-end;
  gap: 27px;
  border-right: 1px solid #cbc7b8;
  box-shadow: 1px 0 #fff;
}
.band .i16 {
  align-self: flex-end;
}
.more {
  width: 9px;
  height: 6px;
}
.combo {
  display: flex;
  height: 21px;
  padding: 1px;
  border: 1px solid #7f9db9;
  background: #fff;
}
.combo select {
  flex: 1;
  appearance: none;
  padding-left: 4px;
}
.drop {
  width: 15px;
  display: flex;
  align-items: center;
  justify-content: center;
  border-radius: 2px;
  background: linear-gradient(#d2defd, #b4c8f6);
}
.drop svg, .sb svg {
  width: 9px;
  height: 6px;
}
.find {
  width: 198px;
  margin-left: 7px;
}
.content {
  flex: 1;
  min-height: 0;
  display: flex;
  gap: 7px;
}
.chat {
  flex: 1;
  min-width: 0;
  display: flex;
  background: #fff;
  border-left: 1px solid #8d8a7b;
  border-bottom: 2px solid #fff;
  color: #3d5c98;
}
.log {
  flex: 1;
  min-width: 0;
  padding-left: 2px;
  overflow: hidden;
}
.line {
  line-height: 14px;
  display: flex;
  justify-content: space-between;
  white-space: nowrap;
}
.line:first-child {
  line-height: 11px;
}
.tail {
  padding-right: 65px;
}
.topic {
  margin-top: 11px;
}
.spaced {
  margin-top: 6px;
}
.vbar {
  width: 17px;
  display: flex;
  flex-direction: column;
  background: #f6f5f0;
}
.vtrack {
  flex: 1;
  display: flex;
  flex-direction: column;
}
.end {
  justify-content: flex-end;
}
.sb, .vthumb, .hthumb {
  border: 1px solid #fff;
  border-radius: 3px;
  box-shadow: inset -1px -1px #9bb3e6, inset 1px 1px #dbe5fe;
  background: #c1d1fa;
}
.sb {
  width: 17px;
  height: 17px;
  flex: none;
  display: flex;
  align-items: center;
  justify-content: center;
}
.vthumb {
  width: 17px;
  background: linear-gradient(90deg, #cad7fc, #b9cbf8);
}
.hthumb {
  height: 17px;
  background: linear-gradient(#cad7fc, #b4c8f6);
}
.vthumb, .hthumb {
  display: flex;
  align-items: center;
  justify-content: center;
}
.vthumb::after {
  content: "";
  width: 7px;
  height: 8px;
  background: repeating-linear-gradient(#eef3ff 0 1px, #8fa9e3 1px 2px);
}
.hthumb::after {
  content: "";
  width: 8px;
  height: 7px;
  background: repeating-linear-gradient(90deg, #eef3ff 0 1px, #8fa9e3 1px 2px);
}
.chatthumb {
  height: 74px;
}
.listthumb {
  height: 118px;
}
.userthumb {
  width: 113px;
}
.widethumb {
  width: 87%;
}
.up {
  transform: rotate(180deg);
}
.left {
  transform: rotate(90deg);
}
.right {
  transform: rotate(-90deg);
}
.hbar {
  display: flex;
  height: 17px;
  background: #f6f5f0;
}
.htrack {
  flex: 1;
}
.users {
  width: 339px;
  display: flex;
  flex-direction: column;
  border: 1px solid #7f9db9;
  background: #fff;
  padding: 1px 1px 1px 0;
}
.usertop {
  flex: 1;
  min-height: 0;
  display: flex;
}
.tablewrap {
  flex: 1;
  min-width: 0;
  overflow: hidden;
}
.userbar {
  margin-right: 17px;
}
table {
  width: 100%;
  table-layout: fixed;
  border-collapse: collapse;
  color: #3d5c98;
}
.c1 {
  width: 99px;
}
.c2 {
  width: 75px;
}
th {
  height: 20px;
  padding: 0 6px;
  font-weight: normal;
  text-align: left;
  white-space: nowrap;
  color: #000;
  background: linear-gradient(#ebeadb 16px, #cbc7b8);
  border-right: 1px solid #c7c5b2;
}
th:last-child {
  border-right: 0;
}
.nickh {
  padding-left: 11px;
}
.exact, .desc {
  padding: 0 0 0 9px;
}
.sort {
  display: inline-block;
  margin: 0 0 2px 6px;
  border: 5px solid transparent;
  border-top: 0;
  border-bottom-color: #aca899;
}
td {
  height: 17px;
  padding: 0 6px;
  white-space: pre;
  overflow: hidden;
}
td:first-child {
  padding: 0 0 0 3px;
}
.r {
  text-align: right;
}
.server {
  color: #8a80ff;
}
.nick {
  display: flex;
  align-items: center;
  gap: 2px;
}
.inputrow {
  height: 28px;
  display: flex;
  align-items: center;
  padding: 0 4px 0 1px;
  border-bottom: 2px solid #9d9a8c;
}
.message {
  flex: 1;
  height: 23px;
  display: flex;
  padding: 1px;
  border: 1px solid #7f9db9;
  background: #fff;
}
.message input {
  flex: 1;
}
.spin {
  width: 16px;
  display: grid;
  gap: 1px;
}
.spin button {
  font-size: 7px;
  line-height: 7px;
  color: #b5b3a5;
  border: 1px solid #dcd9c8;
  border-radius: 2px;
  background: #f3f1e6;
}
.smile {
  width: 23px;
  height: 23px;
  margin: 0 1px;
  border: 1px solid #000;
  background: #ece9d8;
}
.smile svg {
  display: block;
  width: 18px;
  height: 18px;
  margin: auto;
}
.filter {
  width: 116px;
  height: 23px;
  margin-right: 4px;
  border: 1px solid #7f9db9;
  background: #fff;
}
.nickcombo {
  width: 76px;
  height: 23px;
  padding-left: 0;
  color: #3d5c98;
}
.nickcombo select {
  padding-left: 2px;
}
.hubstatus {
  height: 26px;
  display: flex;
  align-items: center;
  padding: 0 5px 2px 0;
  background: linear-gradient(#dcd9c8, #ece9d8 5px);
}
.hubstatus span, .status span {
  height: 18px;
  line-height: 18px;
  padding-left: 3px;
  white-space: nowrap;
  border-right: 1px solid #c5c2b2;
  box-shadow: 1px 0 #fff;
}
.hubstatus .grow, .status .grow {
  padding-left: 1px;
}
.hubstatus span {
  padding-left: 4px;
}
.h1 {
  width: 101px;
}
.h2 {
  width: 66px;
}
.h3 {
  width: 100px;
}
.hubstatus input {
  margin-left: 3px;
}
.transfers {
  height: 122px;
  display: flex;
  flex-direction: column;
  border: 1px solid #7f9db9;
  padding: 1px;
  background: #fff;
}
.thead {
  height: 20px;
  display: flex;
  background: linear-gradient(#ebeadb 16px, #cbc7b8);
}
.thead span {
  margin: 3px 0;
  line-height: 15px;
  padding-left: 9px;
  border-right: 1px solid #c7c5b2;
  box-shadow: 1px 0 #fff;
  white-space: nowrap;
}
.thead .t1 {
  flex: 0 0 753px;
  padding-right: 40px;
  text-align: right;
}
.thead .t2 {
  width: 65px;
  padding-right: 4px;
  text-align: right;
}
.thead .t3 {
  flex: 1;
}
.thead .t4 {
  width: 50px;
}
.thead .t5 {
  width: 112px;
}
.thead .t6 {
  width: 75px;
  border: 0;
  box-shadow: none;
}
.tbody {
  flex: 1;
}
.tabs {
  height: 19px;
  display: flex;
  border-top: 1px solid #000;
  border-bottom: 2px solid #a3a092;
}
.tab {
  height: 17px;
  display: flex;
  align-items: center;
  border-bottom: 2px solid #0f0;
  border-right: 1px solid #000;
  white-space: nowrap;
  width: 123px;
  padding-left: 7px;
  gap: 5px;
}
.tab.on {
  width: 120px;
  padding-left: 6px;
  background: #fff;
  border-top: 1px solid #0f0;
}
.tab.pm {
  width: 99px;
  padding-left: 3px;
  gap: 1px;
  border-color: #f0f;
  border-right-width: 2px;
}
.sq {
  flex: none;
  width: 10px;
  height: 10px;
  border-radius: 2px;
  border: 1px solid #4f9b22;
  background: linear-gradient(135deg, #b5e86c, #4ca822);
}
.tabmore {
  width: 13px;
  height: 15px;
  margin: 1px 1px 0 auto;
  color: #8d8a7b;
  border: 1px solid #c5c2b2;
  border-radius: 3px;
  background: #f5f4ea;
}
.status {
  height: 21px;
  display: flex;
  align-items: center;
  background: linear-gradient(#dcd9c8, #ece9d8 5px);
}
.s0 {
  width: 39px;
}
.s1 {
  width: 102px;
}
.s2 {
  width: 49px;
}
.s3 {
  width: 133px;
}
.s4 {
  width: 88px;
}
.s5 {
  width: 83px;
}
.s6 {
  width: 140px;
}
.s7 {
  width: 60px;
}
.s8 {
  width: 19px;
}
.status .s8 {
  border: 0;
  box-shadow: none;
}

/* taskbar */
.taskbar {
  height: 30px;
  display: flex;
  align-items: center;
  color: #fff;
  background: linear-gradient(#1941a5 0, #3f87ec 2px, #2663e0 5px, #245edb 22px, #1f4fc0 28px, #1941a5);
}
.start {
  width: 87px;
  height: 30px;
  display: flex;
  align-items: center;
  padding: 0 0 2px 10px;
  font: italic bold 17px/20px "Noto Sans", "Open Sans", sans-serif;
  color: #fff;
  text-shadow: 1px 1px 1px #1a4a18;
  border-radius: 0 10px 10px 0;
  background: linear-gradient(#2f7a2f 0, #6cb86a 2px, #3d963c 7px, #3a9439 22px, #2c752b);
}
.start svg {
  width: 16px;
  height: 16px;
}
.quick {
  width: 101px;
  display: flex;
  align-items: center;
  gap: 7px;
  padding-left: 12px;
}
.qmore {
  align-self: flex-start;
  color: #a9c8f8;
  font-size: 14px;
  line-height: 10px;
  padding-left: 3px;
}
.task {
  flex: 0 1 160px;
  height: 25px;
  display: flex;
  align-items: center;
  gap: 4px;
  padding-left: 9px;
  color: #fff;
  white-space: nowrap;
  text-align: left;
  border: 1px solid #2a5fd2;
  border-radius: 3px;
  background: linear-gradient(#5c9bf8 0, #3c81f3 4px, #3a7ef2 20px, #3272e6);
}
.task.active {
  border-color: #15397f;
  background: #1d50b8;
}
.lang {
  margin-left: auto;
  width: 36px;
}
.tray {
  height: 30px;
  display: flex;
  align-items: center;
  gap: 2px;
  width: 182px;
  padding-right: 13px;
  border-left: 1px solid #0f3f96;
  background: linear-gradient(#0c59b9 0, #35b8f5 2px, #139ee9 5px, #1290e8 22px, #0d76cc);
}
.expand {
  width: 18px;
  height: 18px;
  flex: none;
  margin-left: -10px;
}
.expand svg {
  display: block;
}
.punto {
  padding: 1px 1px;
  background: #808080;
  font-size: 12px;
}
.tray time {
  margin-left: auto;
}

/* settings dialog */
.dialog {
  position: absolute;
  left: 12px;
  top: 0;
  width: 680px;
  display: flex;
  flex-direction: column;
  border: 3px solid #0a4be0;
  border-top: 0;
  border-right-color: #0019a8;
  border-bottom-color: #0019a8;
  border-radius: 7px 7px 0 0;
  background: #ece9d8;
}
.dtitle {
  height: 29px;
  margin: 0 -3px;
  display: flex;
  align-items: center;
  justify-content: space-between;
  padding: 2px 5px 0 6px;
  border-radius: 7px 7px 0 0;
  background: linear-gradient(#0a46c8 0, #2f86fa 2px, #0a62ee 5px, #0553e2 12px, #0866fa 24px, #0345c4);
}
.dtitle h1 {
  font: bold 12px/18px "Noto Sans", sans-serif;
  color: #fff;
  text-shadow: 1px 1px #0a2f8a;
}
.dclose {
  width: 21px;
  height: 21px;
  border: 1px solid #fff;
  border-radius: 3px;
  background: linear-gradient(135deg, #f09070, #dd4a22 50%, #c93a14);
}
.dbody {
  padding: 9px 11px 8px 10px;
}
.columns {
  display: flex;
  gap: 14px;
  margin-right: 3px;
}
.tree {
  width: 220px;
  padding: 1px 0 0 3px;
  list-style: none;
  border: 1px solid #7f9db9;
  background: #fff;
}
.tree li {
  display: flex;
  height: 16px;
  white-space: nowrap;
}
.tree .i16 {
  margin-left: 1px;
}
.tree a {
  margin-left: 2px;
  padding: 0 2px;
  line-height: 16px;
  color: #000;
  text-decoration: none;
}
.tree .sel {
  color: #fff;
  background: #316ac5;
}
.guide {
  position: relative;
  width: 19px;
  height: 16px;
}
.g-v::before, .g-half::before, .g-first::before {
  content: "";
  position: absolute;
  left: 9px;
  top: 0;
  bottom: 0;
  width: 1px;
  background: repeating-linear-gradient(#aca899 0 1px, transparent 1px 2px);
}
.g-half::before {
  bottom: 8px;
}
.g-first::before {
  top: 8px;
}
.g-h::after {
  content: "";
  position: absolute;
  left: 9px;
  right: 0;
  top: 8px;
  height: 1px;
  background: repeating-linear-gradient(90deg, #aca899 0 1px, transparent 1px 2px);
}
.exp {
  position: absolute;
  z-index: 1;
  left: 5px;
  top: 4px;
  width: 9px;
  height: 9px;
  border: 1px solid #7b9ebd;
  border-radius: 1px;
  background: linear-gradient(#000, #000) center / 5px 1px no-repeat, linear-gradient(135deg, #fff, #d5d0c0);
}
.panel {
  flex: 1;
  min-width: 0;
  height: 530px;
  padding: 11px 9px 0 14px;
  border: 1px solid #aca899;
  border-right-color: #fff;
  border-bottom-color: #fff;
  background: linear-gradient(#fcfcfe, #f4f3ee 60%);
}
fieldset {
  min-width: 0;
  border: 1px solid #d0d0bf;
  border-radius: 4px;
}
legend {
  margin-left: 5px;
  padding: 0 2px;
  color: #0046d5;
  white-space: nowrap;
}
.f1 {
  height: 45px;
}
.f2 {
  margin-top: 3px;
  height: 307px;
  padding-left: 6px;
}
.f3 {
  margin-top: 3px;
  height: 115px;
  padding-left: 6px;
}
.f2 legend, .f3 legend {
  margin-left: -1px;
}
.iface {
  display: flex;
  align-items: center;
  justify-content: space-between;
  padding: 2px 12px 0 16px;
}
.iface .combo {
  width: 117px;
}
label {
  white-space: nowrap;
}
.radios {
  padding-top: 7px;
}
.radios label, .outradios label {
  display: flex;
  align-items: center;
  gap: 2px;
  height: 21px;
}
input[type="radio"] {
  appearance: none;
  flex: none;
  width: 13px;
  height: 13px;
  border: 1px solid #1d5281;
  border-radius: 50%;
  background: linear-gradient(135deg, #dcdcd7, #fff);
}
input[type="radio"]:checked {
  background: radial-gradient(circle, #21a121 0 2px, #8fd68f 3px, #f6f6f4 4px);
}
input[type="checkbox"] {
  appearance: none;
  flex: none;
  width: 13px;
  height: 13px;
  border: 1px solid #1d5281;
  background: #f6f6f3;
  color: #21a121;
}
input[type="checkbox"]:checked::after {
  content: "";
  display: block;
  width: 9px;
  height: 9px;
  margin: 1px;
  background: currentColor;
  clip-path: polygon(10% 30%, 40% 58%, 90% 5%, 90% 42%, 40% 95%, 10% 66%);
}
input[type="checkbox"]:disabled {
  border-color: #cac8bb;
  background: #fff;
  color: #c5c2b2;
}
.off {
  color: #aca899;
}
.panel input[type="text"], .panel input[type="password"] {
  height: 23px;
  width: 100%;
  padding: 0 0 3px 5px;
  border: 1px solid #7f9db9;
  color: #aca899;
}
.net {
  display: flex;
  justify-content: space-between;
  padding: 0 14px 0 3px;
}
.netleft {
  width: 263px;
  display: flex;
  flex-direction: column;
  gap: 4px;
}
.cap {
  line-height: 16px;
  padding-top: 1px;
}
.wan {
  padding-left: 20px;
}
.iprow {
  display: flex;
  align-items: center;
  gap: 7px;
}
.iprow input {
  flex: 1;
}
.plain {
  flex: none;
  width: 119px;
  height: 21px;
  color: #aca899;
  border: 1px solid #c9c7ba;
  border-radius: 3px;
  background: #f5f4ea;
}
.checks {
  padding-left: 21px;
}
.checks label {
  height: 16px;
}
.checks label, .resolve {
  display: flex;
  align-items: center;
  gap: 2px;
}
.netright {
  width: 81px;
  display: flex;
  flex-direction: column;
  gap: 4px;
}
.ports {
  padding-left: 36px;
}
.netright label {
  display: flex;
  align-items: center;
  justify-content: space-between;
}
.netright label input {
  flex: 0 0 54px;
}
.test {
  margin-top: 12px;
  padding: 0 12px 0 0;
  color: #aca899;
}
.interval {
  display: flex;
  align-items: center;
  justify-content: space-between;
  padding: 2px 14px 0 40px;
  text-shadow: 1px 1px #fff;
}
.panel .interval input {
  width: 54px;
}
.passive label {
  display: flex;
  align-items: center;
  gap: 2px;
  margin-top: 1px;
}
.out {
  display: flex;
  margin-top: -4px;
  padding-right: 13px;
}
.outradios {
  width: 122px;
  padding-top: 4px;
}
.outradios label {
  height: 20px;
}
.outfields {
  flex: 1;
}
.pair {
  display: flex;
  gap: 12px;
}
.pair label {
  display: flex;
  flex-direction: column;
  gap: 4px;
}
.pair.first {
  gap: 10px;
  padding-left: 45px;
}
.pair.second {
  margin-top: 2px;
}
.w128 {
  width: 128px;
}
.socks span {
  padding-left: 66px;
}
.resolve {
  margin-top: 4px;
  padding-left: 70px;
}
.actions {
  display: flex;
  justify-content: flex-end;
  gap: 8px;
  margin-top: 11px;
}
.cmd {
  width: 73px;
  height: 21px;
  border: 1px solid #003c74;
  border-radius: 3px;
  background: linear-gradient(#fff, #ecebe5 80%, #d6d0c5);
}
.default {
  box-shadow: inset 0 0 0 2px #a8c0f2;
}
</style>
